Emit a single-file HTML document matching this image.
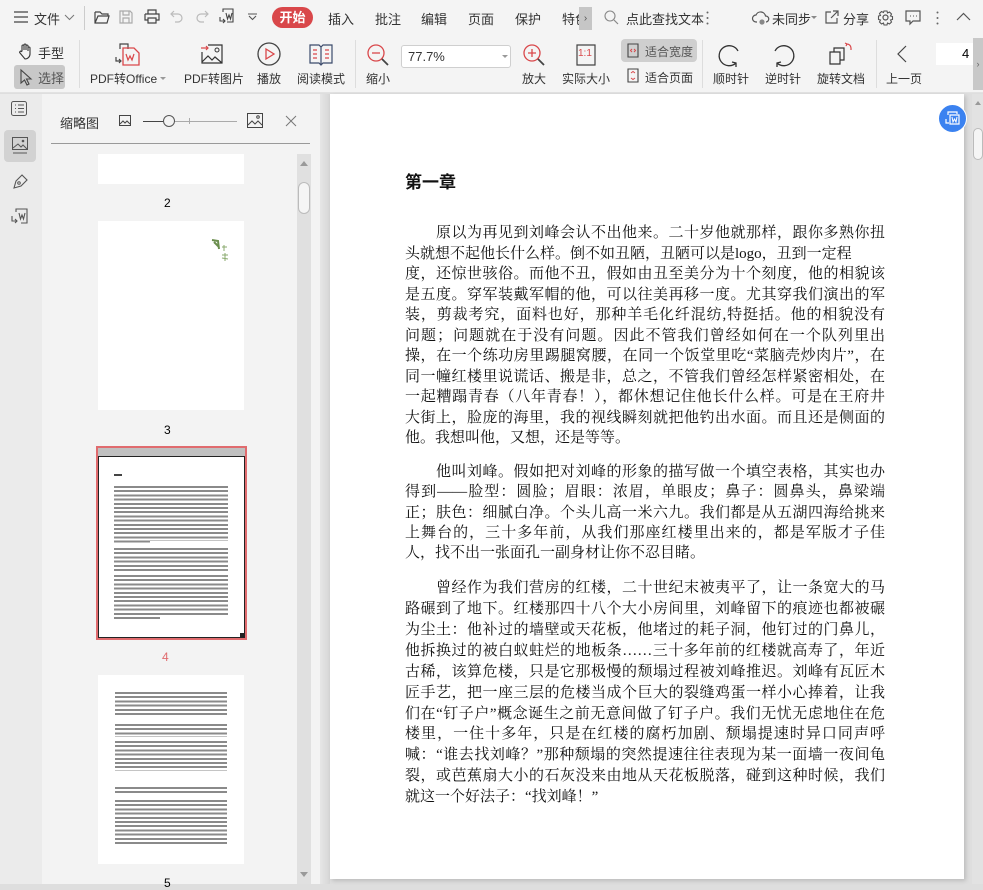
<!DOCTYPE html>
<html><head><meta charset="utf-8"><style>
*{margin:0;padding:0;box-sizing:border-box}
body{width:983px;height:884px;overflow:hidden;background:#dedede;font-family:"Liberation Sans","Noto Sans CJK SC",sans-serif;color:#333;position:relative;font-size:12px}
.a{position:absolute}
#tb{left:0;top:0;width:983px;height:93px;background:#f4f4f4;border-bottom:1px solid #e2e2e2}
.t1{font-size:13px;color:#333;top:9px;white-space:nowrap}
.t2{font-size:12px;color:#333;white-space:nowrap}
svg{position:absolute;overflow:visible}
.pg p{position:absolute;left:405px;width:480px;font-family:"Liberation Serif","Noto Serif CJK SC",serif;font-size:15px;line-height:20px;color:#111;white-space:nowrap;text-align:justify;text-align-last:justify}
.pg p.s{text-align-last:left}
.th{background:#fff;position:absolute}
.tl{position:absolute;background:repeating-linear-gradient(180deg,#8a8a8a 0 2px,transparent 2px 4.2px)}
</style></head><body>
<div id="tb" class="a">
 <svg style="left:14px;top:11px" width="14" height="12"><path d="M0 1h14M0 6h14M0 11h14" stroke="#444" stroke-width="1.3"/></svg>
 <div class="a t1" style="left:34px">文件</div>
 <svg style="left:65px;top:15px" width="9" height="6"><path d="M0 0l4.5 4.5L9 0" stroke="#777" fill="none"/></svg>
 <div class="a" style="left:84px;top:6px;width:1px;height:24px;background:#ccc"></div>
 <svg style="left:94px;top:10px" width="16" height="14"><path d="M1 2h5l2 2h6v2M1 2v11h12l2-7H4l-3 7" stroke="#444" fill="none" stroke-width="1.2"/></svg>
 <svg style="left:119px;top:10px" width="14" height="14"><path d="M1 1h10l2 2v10H1zM4 1v4h6V1M4 13V8h6v5" stroke="#aaa" fill="none" stroke-width="1.2"/></svg>
 <svg style="left:144px;top:9px" width="16" height="15"><path d="M4 5V1h8v4M1 5h14v6h-3M4 11H1V5M4 9h8v5H4z" stroke="#444" fill="none" stroke-width="1.2"/></svg>
 <svg style="left:170px;top:10px" width="13" height="12"><path d="M4 1L1 4l3 3M1 4h7a4 4 0 010 8H5" stroke="#bbb" fill="none" stroke-width="1.2"/></svg>
 <svg style="left:196px;top:10px" width="13" height="12"><path d="M9 1l3 3-3 3M12 4H5a4 4 0 000 8h3" stroke="#bbb" fill="none" stroke-width="1.2"/></svg>
 <svg style="left:219px;top:8px" width="16" height="17"><path d="M4 4V1h10v13H8M1 9v4h5M4 11l2 2-2 2M7 5l1.5 6 1.5-4 1.5 4L13 5" stroke="#444" fill="none" stroke-width="1.1"/></svg>
 <svg style="left:248px;top:14px" width="9" height="7"><path d="M0 0h9M1 2l3.5 3.5L8 2" stroke="#555" fill="none" stroke-width="1.1"/></svg>
 <div class="a" style="left:272px;top:7px;width:41px;height:21px;border-radius:11px;background:#d9474a;color:#fff;font-size:13px;text-align:center;line-height:21px;font-weight:bold">开始</div>
 <div class="a t1" style="left:328px">插入</div>
 <div class="a t1" style="left:375px">批注</div>
 <div class="a t1" style="left:421px">编辑</div>
 <div class="a t1" style="left:468px">页面</div>
 <div class="a t1" style="left:515px">保护</div>
 <div class="a t1" style="left:562px;width:17px;height:18px;overflow:hidden">特色</div>
 <div class="a" style="left:579px;top:7px;width:13px;height:23px;background:#c6c6c6;color:#555;font-size:10px;text-align:center;line-height:23px">›</div>
 <svg style="left:604px;top:10px" width="14" height="14"><circle cx="6" cy="6" r="5" stroke="#888" fill="none" stroke-width="1.1"/><path d="M10 10l4 4" stroke="#888" stroke-width="1.2"/></svg>
 <div class="a t1" style="left:626px">点此查找文本</div>
 <svg style="left:706px;top:11px" width="3" height="14"><circle cx="1.5" cy="1.5" r="1" fill="#666"/><circle cx="1.5" cy="7" r="1" fill="#666"/><circle cx="1.5" cy="12.5" r="1" fill="#666"/></svg>
 <svg style="left:752px;top:10px" width="18" height="15"><path d="M5 12H4a3.5 3.5 0 010-7 5 5 0 019.5 1A3 3 0 0114 12" stroke="#555" fill="none" stroke-width="1.2"/><circle cx="10" cy="12" r="2.6" fill="#888"/></svg>
 <div class="a t1" style="left:772px">未同步</div>
 <svg style="left:811px;top:16px" width="6" height="4"><path d="M0 0h6L3 3z" fill="#888"/></svg>
 <svg style="left:825px;top:10px" width="14" height="14"><path d="M6 2H1v11h11V8M8 1h5v5M13 1L6 8" stroke="#555" fill="none" stroke-width="1.2"/></svg>
 <div class="a t1" style="left:843px">分享</div>
 <svg style="left:878px;top:10px" width="15" height="15"><circle cx="7.5" cy="7.5" r="2.5" stroke="#555" fill="none" stroke-width="1.2"/><path d="M6 1h3l.5 2 2-1 2 2-1 2 2 .5v3l-2 .5 1 2-2 2-2-1-.5 2H6l-.5-2-2 1-2-2 1-2-2-.5V6l2-.5-1-2 2-2 2 1z" stroke="#555" fill="none" stroke-width="1.1"/></svg>
 <svg style="left:905px;top:10px" width="16" height="14"><path d="M1 1h14v10H8l-3 3v-3H1z" stroke="#555" fill="none" stroke-width="1.2"/><path d="M5 6h1M8 6h1M11 6h1" stroke="#555"/></svg>
 <svg style="left:936px;top:11px" width="3" height="14"><circle cx="1.5" cy="1.5" r="1" fill="#666"/><circle cx="1.5" cy="7" r="1" fill="#666"/><circle cx="1.5" cy="12.5" r="1" fill="#666"/></svg>
 <svg style="left:957px;top:13px" width="13" height="7"><path d="M0 7l6.5-6.5L13 7" stroke="#555" fill="none" stroke-width="1.2"/></svg>
 <svg style="left:18px;top:43px" width="16" height="16"><path d="M4 8V3a1 1 0 012 0v4V2a1 1 0 012 0v5V3a1 1 0 012 0v5-3a1 1 0 012 0v6a5 5 0 01-5 5H7L2 10a1 1 0 011.5-1.5z" stroke="#333" fill="none" stroke-width="1.1"/></svg>
 <div class="a t2" style="left:38px;top:43px;font-size:13px">手型</div>
 <div class="a" style="left:14px;top:65px;width:51px;height:24px;background:#c8c8c8;border-radius:3px"></div>
 <svg style="left:20px;top:69px" width="12" height="16"><path d="M1 1v13l3.5-3 2.5 5 2-1-2.5-5H11z" stroke="#444" fill="none" stroke-width="1.1"/></svg>
 <div class="a t2" style="left:38px;top:68px;font-size:13px;color:#555">选择</div>
 <div class="a" style="left:79px;top:40px;width:1px;height:48px;background:#ddd"></div>
 <svg style="left:115px;top:42px" width="26" height="24"><path d="M5 7V2h8v5M1 15v4h4M4 17l2 2-2 2" stroke="#444" fill="none" stroke-width="1.2"/><path d="M8 6h11l5 5v12H8z" stroke="#d9474a" fill="none" stroke-width="1.3"/><path d="M11 12l2 6 2-4 2 4 2-6" stroke="#d9474a" fill="none" stroke-width="1.2"/></svg>
 <div class="a t2" style="left:90px;top:70px">PDF转Office</div>
 <svg style="left:160px;top:77px" width="6" height="4"><path d="M0 0h6L3 3z" fill="#999"/></svg>
 <svg style="left:201px;top:44px" width="22" height="20"><path d="M7 1h14v18H1V8M1 18l6-6 4 4 3-3 7 6" stroke="#333" fill="none" stroke-width="1.2"/><circle cx="16" cy="6" r="2" stroke="#333" fill="none"/><path d="M0 4h7M5 2l2 2-2 2" stroke="#d9474a" fill="none" stroke-width="1.2"/></svg>
 <div class="a t2" style="left:184px;top:70px">PDF转图片</div>
 <svg style="left:257px;top:42px" width="24" height="24"><circle cx="12" cy="12" r="11" stroke="#444" fill="none" stroke-width="1.3"/><path d="M9 7v10l8-5z" stroke="#d9474a" fill="none" stroke-width="1.3"/></svg>
 <div class="a t2" style="left:257px;top:70px">播放</div>
 <svg style="left:309px;top:44px" width="24" height="21"><path d="M1 1h9l2 2 2-2h9v18h-9l-2 2-2-2H1zM12 3v17" stroke="#3b4a6b" fill="none" stroke-width="1.2"/><path d="M4 6h4M4 10h4M4 14h4M16 6h4M16 10h4M16 14h4" stroke="#d9474a" stroke-width="1.2"/></svg>
 <div class="a t2" style="left:297px;top:70px">阅读模式</div>
 <div class="a" style="left:355px;top:40px;width:1px;height:48px;background:#ddd"></div>
 <svg style="left:367px;top:44px" width="24" height="22"><circle cx="9" cy="9" r="8" stroke="#d9474a" fill="none" stroke-width="1.3"/><path d="M5 9h8" stroke="#d9474a" stroke-width="1.3"/><path d="M15 15l6 6" stroke="#444" stroke-width="1.8"/></svg>
 <div class="a t2" style="left:366px;top:70px">缩小</div>
 <div class="a" style="left:401px;top:45px;width:110px;height:23px;background:#fff;border:1px solid #cfcfcf;border-radius:3px"></div>
 <div class="a t2" style="left:408px;top:49px;font-size:13px">77.7%</div>
 <svg style="left:502px;top:55px" width="6" height="4"><path d="M0 0h6L3 3z" fill="#999"/></svg>
 <svg style="left:523px;top:44px" width="24" height="22"><circle cx="9" cy="9" r="8" stroke="#d9474a" fill="none" stroke-width="1.3"/><path d="M5 9h8M9 5v8" stroke="#d9474a" stroke-width="1.3"/><path d="M15 15l6 6" stroke="#444" stroke-width="1.8"/></svg>
 <div class="a t2" style="left:522px;top:70px">放大</div>
 <svg style="left:576px;top:44px" width="20" height="22"><path d="M1 1h18v20H1z" stroke="#444" fill="none" stroke-width="1.2"/></svg>
 <div class="a" style="left:578px;top:48px;font-size:10px;color:#d9474a">1:1</div>
 <div class="a t2" style="left:562px;top:70px">实际大小</div>
 <div class="a" style="left:621px;top:39px;width:76px;height:23px;background:#cfcfcf;border-radius:4px"></div>
 <svg style="left:627px;top:43px" width="12" height="15"><path d="M1 1h10v13H1z" stroke="#444" fill="none" stroke-width="1.1"/><path d="M5 6L3.5 7.5 5 9M7 6l1.5 1.5L7 9" stroke="#d9474a" fill="none"/></svg>
 <div class="a t2" style="left:645px;top:43px;font-size:12px;color:#555">适合宽度</div>
 <svg style="left:627px;top:68px" width="12" height="15"><path d="M1 1h10v13H1z" stroke="#444" fill="none" stroke-width="1.1"/><path d="M4 5l2-1.5L8 5M4 10l2 1.5L8 10" stroke="#d9474a" fill="none"/></svg>
 <div class="a t2" style="left:645px;top:69px">适合页面</div>
 <div class="a" style="left:702px;top:40px;width:1px;height:48px;background:#ddd"></div>
 <svg style="left:719px;top:44px" width="24" height="22"><path d="M17 19A10 10 0 1119 7" stroke="#333" fill="none" stroke-width="1.3"/><path d="M13 18l4 1 0 4" stroke="#333" fill="none" stroke-width="1.3"/></svg>
 <div class="a t2" style="left:713px;top:70px">顺时针</div>
 <svg style="left:770px;top:44px" width="24" height="22"><path d="M7 19A10 10 0 105 7" stroke="#333" fill="none" stroke-width="1.3"/><path d="M11 18l-4 1 0 4" stroke="#333" fill="none" stroke-width="1.3"/></svg>
 <div class="a t2" style="left:765px;top:70px">逆时针</div>
 <svg style="left:828px;top:42px" width="26" height="24"><path d="M6 6h10v12H6z" stroke="#333" fill="#f4f4f4" stroke-width="1.2"/><path d="M2 10h10v12H2z" stroke="#333" fill="#f4f4f4" stroke-width="1.2"/><path d="M19 2a4 4 0 014 4M17 1l2 1-1 2M23 8l0-2" stroke="#d9474a" fill="none" stroke-width="1.2"/></svg>
 <div class="a t2" style="left:817px;top:70px">旋转文档</div>
 <div class="a" style="left:876px;top:40px;width:1px;height:48px;background:#ddd"></div>
 <svg style="left:897px;top:45px" width="10" height="18"><path d="M9 1L1 9l8 8" stroke="#444" fill="none" stroke-width="1.2"/></svg>
 <div class="a t2" style="left:886px;top:70px">上一页</div>
 <div class="a" style="left:936px;top:43px;width:37px;height:22px;background:#fff"></div>
 <div class="a t2" style="left:962px;top:46px;font-size:13px;color:#000">4</div>
 <div class="a" style="left:973px;top:38px;width:10px;height:52px;background:#c8c8c8;color:#666;font-size:9px;line-height:52px;text-align:center">›</div>
</div>

<div class="a" style="left:0;top:94px;width:42px;height:790px;background:#ebebeb"></div>
<svg style="left:11px;top:101px" width="16" height="15"><rect x="0.5" y="0.5" width="15" height="14" rx="2" stroke="#555" fill="none"/><path d="M4 4h1M7 4h6M4 7.5h1M7 7.5h6M4 11h1M7 11h6" stroke="#555"/></svg>
<div class="a" style="left:4px;top:130px;width:32px;height:32px;background:#d2d2d2;border-radius:4px"></div>
<svg style="left:12px;top:137px" width="16" height="18"><rect x="0.5" y="0.5" width="15" height="12" stroke="#555" fill="none"/><path d="M1 11l5-4 3 3 2-2 4 4M1 16h14" stroke="#555" fill="none"/><circle cx="11" cy="4" r="1.3" fill="#555"/></svg>
<svg style="left:12px;top:173px" width="17" height="17"><path d="M2 15l2-7 6-6 5 5-6 6z M10 2l5 5" stroke="#555" fill="none" stroke-width="1.1"/><circle cx="7" cy="10" r="1.3" stroke="#555" fill="none"/></svg>
<svg style="left:11px;top:208px" width="17" height="17"><path d="M5 4V1h11v14h-6M1 8v5h5M4 11l2 2-2 2M8 5l1.5 6 1.5-4 1.5 4L14 5" stroke="#555" fill="none" stroke-width="1.1"/></svg>

<div class="a" style="left:42px;top:94px;width:278px;height:790px;background:#f3f3f3"></div>
<div class="a" style="left:320px;top:94px;width:10px;height:790px;background:linear-gradient(90deg,#e6e6e6,#d6d6d6)"></div>
<div class="a" style="left:60px;top:113px;font-size:13px;color:#333">缩略图</div>
<svg style="left:119px;top:115px" width="12" height="11"><rect x="0.5" y="0.5" width="11" height="10" stroke="#444" fill="none"/><path d="M1 9l3-3 2 2 2-2 3 3" stroke="#444" fill="none"/></svg>
<div class="a" style="left:143px;top:121px;width:94px;height:1px;background:#aaa"></div>
<div class="a" style="left:143px;top:121px;width:25px;height:1px;background:#444"></div>
<div class="a" style="left:163px;top:115px;width:12px;height:12px;border-radius:50%;border:1px solid #555;background:#f3f3f3"></div>
<div class="a" style="left:189px;top:118px;width:1px;height:6px;background:#aaa"></div>
<svg style="left:247px;top:113px" width="16" height="15"><rect x="0.5" y="0.5" width="15" height="14" stroke="#444" fill="none"/><path d="M1 12l4-4 3 3 3-3 4 4" stroke="#444" fill="none"/><circle cx="11" cy="4" r="1.3" stroke="#444" fill="none"/></svg>
<svg style="left:286px;top:116px" width="10" height="10"><path d="M0 0l10 10M10 0L0 10" stroke="#777"/></svg>
<div class="a" style="left:51px;top:143px;width:259px;height:1px;background:#999"></div>
<div class="a" style="left:297px;top:154px;width:14px;height:730px;background:#e0e0e0"></div>
<svg style="left:300px;top:161px" width="8" height="5"><path d="M0 5h8L4 0z" fill="#999"/></svg>
<div class="a" style="left:298px;top:182px;width:12px;height:32px;background:#f5f5f5;border:1px solid #bbb;border-radius:6px"></div>
<svg style="left:300px;top:872px" width="8" height="5"><path d="M0 0h8L4 5z" fill="#999"/></svg>
<div class="th" style="left:98px;top:154px;width:146px;height:30px"></div>
<div class="a" style="left:164px;top:196px;font-size:12px;color:#000">2</div>
<div class="th" style="left:98px;top:221px;width:146px;height:189px"></div>
<svg style="left:210px;top:237px" width="20" height="30"><path d="M2 3l6 1 1 8M4 5l5 5" stroke="#6b8e4e" stroke-width="2" fill="none"/><path d="M12 10h5M14 8v6M12 18h6M15 16v8M12 21l6 1" stroke="#8aaa6e" stroke-width="1" fill="none"/></svg>
<div class="a" style="left:164px;top:423px;font-size:12px;color:#000">3</div>
<div class="a" style="left:96px;top:446px;width:151px;height:194px;border:2px solid #e06b6e"></div>
<div class="a" style="left:98px;top:448px;width:147px;height:9px;background:#c0c0c0"></div>
<div class="th" style="left:98px;top:456px;width:147px;height:182px;border:1.5px solid #222"></div>
<div class="a" style="left:240px;top:633px;width:4px;height:4px;background:#222"></div>
<div class="a" style="left:114px;top:474px;width:8px;height:2px;background:#444"></div>
<div class="tl" style="left:114px;top:486px;width:114px;height:57px"></div>
<div class="a" style="left:150px;top:541px;width:80px;height:3px;background:#fff"></div>
<div class="tl" style="left:114px;top:548px;width:114px;height:23px"></div>
<div class="tl" style="left:114px;top:575px;width:114px;height:46px"></div>
<div class="a" style="left:160px;top:617px;width:70px;height:4px;background:#fff"></div>
<div class="a" style="left:162px;top:650px;font-size:12px;color:#e06b6e">4</div>
<div class="th" style="left:98px;top:675px;width:146px;height:189px"></div>
<div class="tl" style="left:115px;top:692px;width:112px;height:25px"></div>
<div class="tl" style="left:115px;top:724px;width:112px;height:13px"></div>
<div class="tl" style="left:115px;top:741px;width:112px;height:30px"></div>
<div class="tl" style="left:115px;top:787px;width:112px;height:8px"></div>
<div class="tl" style="left:115px;top:800px;width:112px;height:46px"></div>
<div class="a" style="left:164px;top:876px;font-size:12px;color:#000">5</div>

<div class="a" style="left:330px;top:94px;width:634px;height:785px;background:#fff;box-shadow:2px 2px 4px rgba(0,0,0,.15)"></div>
<div class="a" style="left:972px;top:94px;width:11px;height:790px;background:#e2e2e2"></div>
<svg style="left:975px;top:101px" width="6" height="4"><path d="M0 4h6L3 0z" fill="#999"/></svg>
<div class="a" style="left:973px;top:128px;width:10px;height:32px;background:#f5f5f5;border:1px solid #bbb;border-radius:5px"></div>
<div class="a" style="left:938px;top:104px;width:29px;height:29px;border-radius:50%;background:#3b82f0;border:1px solid #fff"></div>
<svg style="left:945px;top:110px" width="16" height="16"><path d="M3 5V2h9v2M5 5h9v9H5zM1 9v4h3" stroke="#fff" fill="none" stroke-width="1.2"/><path d="M7 7l1 5 1.5-3 1.5 3 1-5" stroke="#fff" fill="none"/></svg>

<div class="pg">
<div class="a" style="left:405px;top:168px;font-family:'Liberation Sans','Noto Sans CJK SC',sans-serif;font-weight:bold;font-size:17px;color:#111">第一章</div>
<p style="top:223px">　　原以为再见到刘峰会认不出他来。二十岁他就那样，跟你多熟你扭</p>
<p class="s" style="top:244px">头就想不起他长什么样。倒不如丑陋，丑陋可以是logo，丑到一定程</p>
<p style="top:264px">度，还惊世骇俗。而他不丑，假如由丑至美分为十个刻度，他的相貌该</p>
<p style="top:285px">是五度。穿军装戴军帽的他，可以往美再移一度。尤其穿我们演出的军</p>
<p style="top:305px">装，剪裁考究，面料也好，那种羊毛化纤混纺,特挺括。他的相貌没有</p>
<p style="top:326px">问题；问题就在于没有问题。因此不管我们曾经如何在一个队列里出</p>
<p style="top:346px">操，在一个练功房里踢腿窝腰，在同一个饭堂里吃“菜脑壳炒肉片”，在</p>
<p style="top:367px">同一幢红楼里说谎话、搬是非，总之，不管我们曾经怎样紧密相处，在</p>
<p style="top:387px">一起糟蹋青春（八年青春！），都休想记住他长什么样。可是在王府井</p>
<p style="top:408px">大街上，脸庞的海里，我的视线瞬刻就把他钓出水面。而且还是侧面的</p>
<p class="s" style="top:428px">他。我想叫他，又想，还是等等。</p>
<p style="top:462px">　　他叫刘峰。假如把对刘峰的形象的描写做一个填空表格，其实也办</p>
<p style="top:482px">得到——脸型：圆脸；眉眼：浓眉，单眼皮；鼻子：圆鼻头，鼻梁端</p>
<p style="top:503px">正；肤色：细腻白净。个头儿高一米六九。我们都是从五湖四海给挑来</p>
<p style="top:523px">上舞台的，三十多年前，从我们那座红楼里出来的，都是军版才子佳</p>
<p class="s" style="top:543px">人，找不出一张面孔一副身材让你不忍目睹。</p>
<p style="top:578px">　　曾经作为我们营房的红楼，二十世纪末被夷平了，让一条宽大的马</p>
<p style="top:599px">路碾到了地下。红楼那四十八个大小房间里，刘峰留下的痕迹也都被碾</p>
<p style="top:620px">为尘土：他补过的墙壁或天花板，他堵过的耗子洞，他钉过的门鼻儿，</p>
<p style="top:641px">他拆换过的被白蚁蛀烂的地板条……三十多年前的红楼就高寿了，年近</p>
<p style="top:662px">古稀，该算危楼，只是它那极慢的颓塌过程被刘峰推迟。刘峰有瓦匠木</p>
<p style="top:683px">匠手艺，把一座三层的危楼当成个巨大的裂缝鸡蛋一样小心捧着，让我</p>
<p style="top:704px">们在“钉子户”概念诞生之前无意间做了钉子户。我们无忧无虑地住在危</p>
<p style="top:724px">楼里，一住十多年，只是在红楼的腐朽加剧、颓塌提速时异口同声呼</p>
<p style="top:745px">喊：“谁去找刘峰？”那种颓塌的突然提速往往表现为某一面墙一夜间龟</p>
<p style="top:766px">裂，或芭蕉扇大小的石灰没来由地从天花板脱落，碰到这种时候，我们</p>
<p class="s" style="top:787px">就这一个好法子：“找刘峰！”</p>
</div>
</body></html>
